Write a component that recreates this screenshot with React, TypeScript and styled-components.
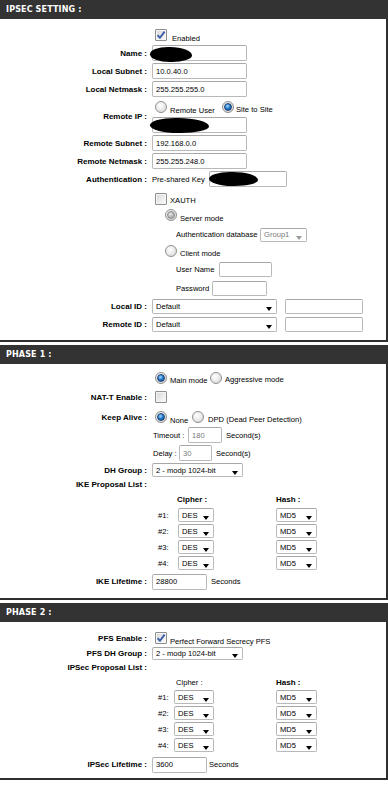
import React from "react";
import styled, { createGlobalStyle, css } from "styled-components";

const FONT = `"Liberation Sans", Arial, sans-serif`;

const GlobalStyle = createGlobalStyle`
  html, body { margin: 0; padding: 0; background: #fff; }
  body { font-family: ${FONT}; font-size: 7.6px; color: #000; }
  * { box-sizing: border-box; }
`;

const Page = styled.div`
  width: 388px;
`;

const Section = styled.section`
  margin-bottom: 3px;
`;

const Header = styled.div`
  height: 19px;
  background: #333333;
  color: #fff;
  font-family: "DejaVu Sans", Verdana, sans-serif;
  font-weight: bold;
  font-size: 8px;
  display: flex;
  align-items: center;
  padding-left: 6px;
  letter-spacing: 0.15px;
`;

const Panel = styled.div<{ $pt: number; $pb: number }>`
  border-right: 2px solid #2f2f2f;
  border-bottom: 2px solid #2f2f2f;
  padding-top: ${(p) => p.$pt}px;
  padding-bottom: ${(p) => p.$pb}px;
  display: flex;
  flex-direction: column;
`;

const Row = styled.div<{ $h: number; $mt?: number }>`
  display: grid;
  grid-template-columns: 147px 1fr;
  column-gap: 5px;
  align-items: center;
  height: ${(p) => p.$h}px;
  margin-top: ${(p) => p.$mt ?? 0}px;
`;

const Label = styled.div`
  text-align: right;
  font-weight: bold;
  font-size: 8px;
  white-space: nowrap;
`;

const Cell = styled.div`
  display: flex;
  align-items: center;
  height: 100%;
`;

const Stack = styled.div`
  display: flex;
  flex-direction: column;
`;

const Sub = styled.div`
  height: 18px;
  display: flex;
  align-items: center;
`;

const Text = styled.span<{ $ml?: number; $drop?: number; $w?: number; $bold?: boolean }>`
  white-space: nowrap;
  margin-left: ${(p) => p.$ml ?? 0}px;
  padding-top: ${(p) => (p.$drop ?? 0) * 2}px;
  font-weight: ${(p) => (p.$bold ? "bold" : "normal")};
  font-size: ${(p) => (p.$bold ? "8px" : "7.6px")};
  ${(p) =>
    p.$w !== undefined &&
    css`
      width: ${p.$w}px;
      flex: none;
    `}
`;

const Field = styled.span<{ $ml?: number }>`
  position: relative;
  display: inline-flex;
  margin-left: ${(p) => p.$ml ?? 0}px;
`;

const TextBox = styled.input<{ $w: number; $h?: number; $dim?: boolean }>`
  width: ${(p) => p.$w}px;
  height: ${(p) => p.$h ?? 16}px;
  border: 1px solid #b9b9b9;
  border-top-color: #a8a8a8;
  border-radius: 2px;
  padding: 0 3px;
  margin: 0;
  font-family: ${FONT};
  font-size: 7.6px;
  color: ${(p) => (p.$dim ? "#7a7a7a" : "#000")};
  background: #fff;
  outline: none;
`;

const Redact = styled.span<{ $l: number; $t: number; $w: number; $h: number }>`
  position: absolute;
  left: ${(p) => p.$l}px;
  top: ${(p) => p.$t}px;
  width: ${(p) => p.$w}px;
  height: ${(p) => p.$h}px;
  background: #000;
  border-radius: 45% 55% 50% 50% / 50% 60% 45% 55%;
`;

const SelectBox = styled.div<{ $w: number; $h?: number; $ml?: number; $off?: boolean }>`
  width: ${(p) => p.$w}px;
  height: ${(p) => p.$h ?? 14}px;
  margin-left: ${(p) => p.$ml ?? 0}px;
  border: 1px solid #b9b9b9;
  border-top-color: #a8a8a8;
  border-radius: 2px;
  background: #fff;
  display: flex;
  align-items: center;
  padding-left: 3px;
  color: ${(p) => (p.$off ? "#777" : "#000")};
  white-space: nowrap;
  flex: none;
`;

const Arrow = styled.span<{ $off?: boolean }>`
  margin-left: auto;
  margin-right: 4px;
  margin-top: 6px;
  width: 0;
  height: 0;
  border-left: 3.5px solid transparent;
  border-right: 3.5px solid transparent;
  border-top: 4px solid ${(p) => (p.$off ? "#9a9a9a" : "#000")};
  flex: none;
`;

const CheckBox = styled.span<{ $ml?: number }>`
  width: 12px;
  height: 12px;
  flex: none;
  margin-left: ${(p) => p.$ml ?? 0}px;
  border: 1px solid #8e8f8f;
  border-radius: 1px;
  background: linear-gradient(135deg, #d6d6d6 0%, #f2f2f2 70%, #ffffff 100%);
  box-shadow: inset 0 0 0 1px #f4f4f4;
  display: inline-flex;
  align-items: center;
  justify-content: center;
`;

const RadioDot = styled.span<{ $ml?: number; $on?: boolean; $grey?: boolean }>`
  width: 12px;
  height: 12px;
  flex: none;
  margin-left: ${(p) => p.$ml ?? 0}px;
  border: 1px solid #8e8f8f;
  border-radius: 50%;
  background: radial-gradient(circle at 40% 35%, #ffffff 0%, #ececec 45%, #cfcfcf 100%);
  display: inline-flex;
  align-items: center;
  justify-content: center;
  &::after {
    content: "";
    display: ${(p) => (p.$on ? "block" : "none")};
    width: 6px;
    height: 6px;
    border-radius: 50%;
    border: 1px solid ${(p) => (p.$grey ? "#8a8a8a" : "#23406e")};
    background: ${(p) =>
      p.$grey
        ? "radial-gradient(circle at 40% 35%, #e6e6e6 0%, #a9a9a9 70%)"
        : "radial-gradient(circle at 40% 35%, #a8dcff 0%, #2a7fd0 45%, #0d3f86 100%)"};
  }
`;

const Check: React.FC<{ on?: boolean; ml?: number }> = ({ on, ml }) => (
  <CheckBox $ml={ml}>
    {on && (
      <svg width="10" height="10" viewBox="0 0 10 10">
        <path d="M1.6 5.2 L4 7.8 L8.6 1.6" fill="none" stroke="#3b5ca8" strokeWidth="1.9" strokeLinejoin="round" />
      </svg>
    )}
  </CheckBox>
);

const Sel: React.FC<{ w: number; h?: number; ml?: number; off?: boolean; children: React.ReactNode }> = ({
  w,
  h,
  ml,
  off,
  children,
}) => (
  <SelectBox $w={w} $h={h} $ml={ml} $off={off}>
    <span>{children}</span>
    <Arrow $off={off} />
  </SelectBox>
);

const Proposal: React.FC<{ n: number; labW: number; cipW: number; hashMl: number }> = ({ n, labW, cipW, hashMl }) => (
  <Row $h={16}>
    <Label />
    <Cell>
      <Text $ml={6} $w={labW}>
        #{n}:
      </Text>
      <Sel w={cipW}>DES</Sel>
      <Sel w={41} ml={hashMl}>
        MD5
      </Sel>
    </Cell>
  </Row>
);

export default function App() {
  return (
    <Page>
      <GlobalStyle />
      <Section>
        <Header>IPSEC SETTING :</Header>
        <Panel $pt={8} $pb={7}>
          <Row $h={16}>
            <Label />
            <Cell>
              <Check on ml={3} />
              <Text $ml={5} $drop={3}>
                Enabled
              </Text>
            </Cell>
          </Row>
          <Row $h={18} $mt={1}>
            <Label>Name :</Label>
            <Cell>
              <Field>
                <TextBox $w={95} readOnly value="" />
                <Redact $l={-2} $t={2} $w={42} $h={15} />
              </Field>
            </Cell>
          </Row>
          <Row $h={18}>
            <Label>Local Subnet :</Label>
            <Cell>
              <TextBox $w={95} readOnly value="10.0.40.0" />
            </Cell>
          </Row>
          <Row $h={18}>
            <Label>Local Netmask :</Label>
            <Cell>
              <TextBox $w={95} readOnly value="255.255.255.0" />
            </Cell>
          </Row>
          <Row $h={36}>
            <Label>Remote IP :</Label>
            <Stack>
              <Sub>
                <RadioDot $ml={3} />
                <Text $ml={3} $drop={3} $w={52}>
                  Remote User
                </Text>
                <RadioDot $on />
                <Text $ml={2} $drop={2}>
                  Site to Site
                </Text>
              </Sub>
              <Sub>
                <Field>
                  <TextBox $w={95} readOnly value="" />
                  <Redact $l={-2} $t={1} $w={59} $h={15} />
                </Field>
              </Sub>
            </Stack>
          </Row>
          <Row $h={18}>
            <Label>Remote Subnet :</Label>
            <Cell>
              <TextBox $w={95} readOnly value="192.168.0.0" />
            </Cell>
          </Row>
          <Row $h={18}>
            <Label>Remote Netmask :</Label>
            <Cell>
              <TextBox $w={95} readOnly value="255.255.248.0" />
            </Cell>
          </Row>
          <Row $h={18}>
            <Label>Authentication :</Label>
            <Cell>
              <Text $w={57}>Pre-shared Key</Text>
              <Field>
                <TextBox $w={78} readOnly value="" />
                <Redact $l={0} $t={1} $w={49} $h={14} />
              </Field>
            </Cell>
          </Row>
          <Row $h={17} $mt={2}>
            <Label />
            <Cell>
              <Check ml={3} />
              <Text $ml={3} $drop={2}>
                XAUTH
              </Text>
            </Cell>
          </Row>
          <Row $h={16}>
            <Label />
            <Cell>
              <RadioDot $ml={13} $on $grey />
              <Text $ml={3} $drop={3}>
                Server mode
              </Text>
            </Cell>
          </Row>
          <Row $h={17} $mt={3}>
            <Label />
            <Cell>
              <Text $ml={24} $w={84}>
                Authentication database
              </Text>
              <Sel w={47} off>
                Group1
              </Sel>
            </Cell>
          </Row>
          <Row $h={13}>
            <Label />
            <Cell>
              <RadioDot $ml={13} />
              <Text $ml={3} $drop={3}>
                Client mode
              </Text>
            </Cell>
          </Row>
          <Row $h={18} $mt={4}>
            <Label />
            <Cell>
              <Text $ml={24} $w={43}>
                User Name
              </Text>
              <TextBox $w={53} $h={15} readOnly value="" />
            </Cell>
          </Row>
          <Row $h={18} $mt={1}>
            <Label />
            <Cell>
              <Text $ml={24} $w={36}>
                Password
              </Text>
              <TextBox $w={55} $h={15} readOnly value="" />
            </Cell>
          </Row>
          <Row $h={18}>
            <Label>Local ID :</Label>
            <Cell>
              <Sel w={125} h={15}>
                Default
              </Sel>
              <Field $ml={8}>
                <TextBox $w={78} $h={15} readOnly value="" />
              </Field>
            </Cell>
          </Row>
          <Row $h={18}>
            <Label>Remote ID :</Label>
            <Cell>
              <Sel w={125} h={15}>
                Default
              </Sel>
              <Field $ml={8}>
                <TextBox $w={78} $h={15} readOnly value="" />
              </Field>
            </Cell>
          </Row>
        </Panel>
      </Section>

      <Section>
        <Header>PHASE 1 :</Header>
        <Panel $pt={5} $pb={8}>
          <Row $h={18}>
            <Label />
            <Cell>
              <RadioDot $ml={3} $on />
              <Text $ml={3} $drop={2} $w={40}>
                Main mode
              </Text>
              <RadioDot />
              <Text $ml={3} $drop={1}>
                Aggressive mode
              </Text>
            </Cell>
          </Row>
          <Row $h={18} $mt={1}>
            <Label>NAT-T Enable :</Label>
            <Cell>
              <Check ml={3} />
            </Cell>
          </Row>
          <Row $h={18} $mt={2}>
            <Label>Keep Alive :</Label>
            <Cell>
              <RadioDot $ml={3} $on />
              <Text $ml={3} $drop={3} $w={22}>
                None
              </Text>
              <RadioDot />
              <Text $ml={4} $drop={2}>
                DPD (Dead Peer Detection)
              </Text>
            </Cell>
          </Row>
          <Row $h={18}>
            <Label />
            <Cell>
              <Text $ml={1} $w={35}>
                Timeout :
              </Text>
              <TextBox $w={34} $dim readOnly value="180" />
              <Text $ml={4}>Second(s)</Text>
            </Cell>
          </Row>
          <Row $h={18}>
            <Label />
            <Cell>
              <Text $ml={1} $w={26}>
                Delay :
              </Text>
              <TextBox $w={33} $dim readOnly value="30" />
              <Text $ml={4}>Second(s)</Text>
            </Cell>
          </Row>
          <Row $h={16}>
            <Label>DH Group :</Label>
            <Cell>
              <Sel w={91}>2 - modp 1024-bit</Sel>
            </Cell>
          </Row>
          <Row $h={13}>
            <Label>IKE Proposal List :</Label>
            <Cell />
          </Row>
          <Row $h={16}>
            <Label />
            <Cell>
              <Text $ml={25} $w={99} $bold>
                Cipher :
              </Text>
              <Text $bold>Hash :</Text>
            </Cell>
          </Row>
          {[1, 2, 3, 4].map((n) => (
            <Proposal key={n} n={n} labW={20} cipW={36} hashMl={62} />
          ))}
          <Row $h={17} $mt={2}>
            <Label>IKE Lifetime :</Label>
            <Cell>
              <TextBox $w={55} readOnly value="28800" />
              <Text $ml={4}>Seconds</Text>
            </Cell>
          </Row>
        </Panel>
      </Section>

      <Section>
        <Header>PHASE 2 :</Header>
        <Panel $pt={8} $pb={4}>
          <Row $h={16}>
            <Label>PFS Enable :</Label>
            <Cell>
              <Check on ml={3} />
              <Text $ml={3} $drop={3}>
                Perfect Forward Secrecy PFS
              </Text>
            </Cell>
          </Row>
          <Row $h={14}>
            <Label>PFS DH Group :</Label>
            <Cell>
              <Sel w={91} h={13}>
                2 - modp 1024-bit
              </Sel>
            </Cell>
          </Row>
          <Row $h={15}>
            <Label>IPSec Proposal List :</Label>
            <Cell />
          </Row>
          <Row $h={14}>
            <Label />
            <Cell>
              <Text $ml={24} $w={100}>
                Cipher :
              </Text>
              <Text $bold>Hash :</Text>
            </Cell>
          </Row>
          {[1, 2, 3, 4].map((n) => (
            <Proposal key={n} n={n} labW={16} cipW={40} hashMl={62} />
          ))}
          <Row $h={19} $mt={2}>
            <Label>IPSec Lifetime :</Label>
            <Cell>
              <TextBox $w={55} readOnly value="3600" />
              <Text $ml={2}>Seconds</Text>
            </Cell>
          </Row>
        </Panel>
      </Section>
    </Page>
  );
}
